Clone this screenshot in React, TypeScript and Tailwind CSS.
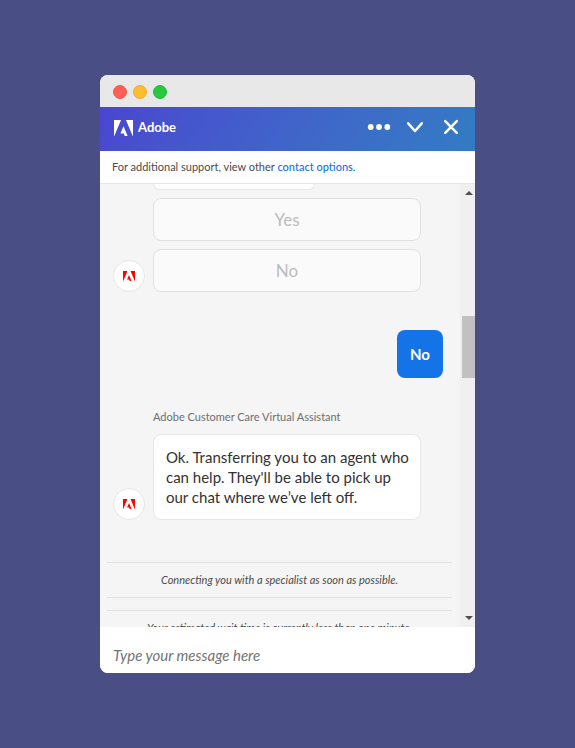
import type { ReactNode } from 'react';

function AdobeMark({ className }: { className: string }) {
  return (
    <svg viewBox="0 1.376 24 21.248" fill="currentColor" className={className} aria-hidden="true">
      <path d="M13.966 22.624l-1.69-4.281H8.122l3.892-9.144 5.662 13.425zM8.884 1.376H0v21.248zm15.116 0h-8.884L24 22.624z" />
    </svg>
  );
}

function Avatar() {
  return (
    <div className="flex size-8 shrink-0 items-center justify-center rounded-full border border-[#e6e6e6] bg-white text-[#ff0000]">
      <AdobeMark className="w-3" />
    </div>
  );
}

function BotRow({ children }: { children: ReactNode }) {
  return (
    <div className="flex items-end gap-2 pr-[39px] pl-[13px]">
      <Avatar />
      <div className="flex flex-1 flex-col gap-2">{children}</div>
    </div>
  );
}

function ReplyOption({ label }: { label: string }) {
  return (
    <button
      type="button"
      disabled
      className="h-[43px] w-full rounded-lg border border-[#e1e1e1] bg-[#fafafa] text-[17px] text-[#bcbcbc]"
    >
      {label}
    </button>
  );
}

function StatusLine({ children }: { children: ReactNode }) {
  return (
    <p className="mr-2 ml-[7px] shrink-0 border-y border-[#e1e1e1] py-[9px] text-center text-[11px] leading-4 text-[#4b4b4b] italic">
      {children}
    </p>
  );
}

function TitleBar() {
  return (
    <div className="flex h-8 shrink-0 items-center gap-[6px] bg-[#e8e8e8] pt-[2px] pl-[13px]">
      <span className="size-[14px] rounded-full border border-[#f0554e] bg-[#ff5f57]" />
      <span className="size-[14px] rounded-full border border-[#eeac2c] bg-[#ffbd2e]" />
      <span className="size-[14px] rounded-full border border-[#22b93a] bg-[#28c940]" />
    </div>
  );
}

function Header() {
  return (
    <header className="flex h-11 shrink-0 items-center bg-linear-125 from-[#4a46d0] to-[#327cc3] pr-3 pb-[2px] pl-[14px] text-white">
      <AdobeMark className="w-[19px]" />
      <h1 className="ml-[5px] flex-1 text-[13px] font-bold">Adobe</h1>
      <div className="flex items-center gap-3 pb-[2px]">
        <button type="button" aria-label="More options">
          <svg viewBox="0 0 24 16" className="h-4 w-6" fill="currentColor">
            <circle cx="3.700" cy="8" r="2.900" />
            <circle cx="12" cy="8" r="2.900" />
            <circle cx="20.300" cy="8" r="2.900" />
          </svg>
        </button>
        <button type="button" aria-label="Minimize">
          <svg viewBox="0 0 24 16" className="h-4 w-6" fill="none" stroke="currentColor" strokeWidth="2.500" strokeLinecap="round" strokeLinejoin="round">
            <path d="M5.200 4.300l6.800 7.700 6.800-7.700" />
          </svg>
        </button>
        <button type="button" aria-label="Close">
          <svg viewBox="0 0 24 16" className="h-4 w-6" fill="none" stroke="currentColor" strokeWidth="2.500" strokeLinecap="round">
            <path d="M6.200 2.200l11.600 11.600M17.800 2.200L6.200 13.800" />
          </svg>
        </button>
      </div>
    </header>
  );
}

function ScrollTrack() {
  return (
    <div className="flex w-[15px] shrink-0 flex-col items-center justify-between bg-[#f0f0f0] text-[#505050]" aria-hidden="true">
      <svg viewBox="0 0 8 4" className="mt-[7px] ml-[2px] h-1 w-2" fill="currentColor">
        <path d="M0 4L4 0 8 4z" />
      </svg>
      <div className="flex w-full flex-1 flex-col items-end">
        <div className="flex-[121]" />
        <div className="h-[62px] w-[13px] bg-[#c1c1c1]" />
        <div className="flex-[238]" />
      </div>
      <svg viewBox="0 0 8 4" className="mb-[7px] ml-[2px] h-1 w-2" fill="currentColor">
        <path d="M0 0L4 4 8 0z" />
      </svg>
    </div>
  );
}

export default function App() {
  return (
    <main className="flex h-screen items-stretch justify-center bg-[#494e84] py-[75px] font-[Lato,sans-serif]">
      <section className="flex w-full max-w-[375px] flex-col overflow-hidden rounded-lg bg-white">
        <TitleBar />
        <Header />
        <p className="shrink-0 border-b border-[#e6e6e6] px-3 py-2 text-[11px] leading-4 text-[#4b4b4b]">
          For additional support, view other{' '}
          <a href="#contact" className="font-medium text-[#1473e6]">
            contact options.
          </a>
        </p>

        <div className="flex min-h-0 flex-1 bg-[#f5f5f5]">
          <div className="flex min-w-0 flex-1 flex-col overflow-hidden">
            <div className="mb-2 ml-[53px] h-[6px] w-[162px] shrink-0 rounded-b-lg border border-t-0 border-[#e6e6e6] bg-white" />
            <BotRow>
              <ReplyOption label="Yes" />
              <ReplyOption label="No" />
            </BotRow>

            <p className="mt-[38px] mr-[17px] self-end rounded-lg bg-[#1473e6] px-[13px] py-[14px] text-[15px] leading-5 font-bold text-white">
              No
            </p>

            <p className="mt-[31px] mb-[9px] ml-[53px] text-[11px] leading-4 text-[#6e6e6e]">
              Adobe Customer Care Virtual Assistant
            </p>
            <BotRow>
              <p className="rounded-lg border border-[#e6e6e6] bg-white py-3 pr-2 pl-3 text-[15px] leading-5 text-[#323232]">
                Ok. Transferring you to an agent who can help. They'll be able to pick up our chat where we’ve left off.
              </p>
            </BotRow>

            <div className="mt-[42px] flex flex-col gap-3">
              <StatusLine>Connecting you with a specialist as soon as possible.</StatusLine>
              <StatusLine>Your estimated wait time is currently less than one minute.</StatusLine>
            </div>
          </div>
          <ScrollTrack />
        </div>

        <input
          type="text"
          aria-label="Message"
          placeholder="Type your message here"
          className="h-[46px] w-full shrink-0 bg-white px-[13px] pt-[10px] text-[15px] text-[#4b4b4b] italic outline-none placeholder:text-[#747474]"
        />
      </section>
    </main>
  );
}
